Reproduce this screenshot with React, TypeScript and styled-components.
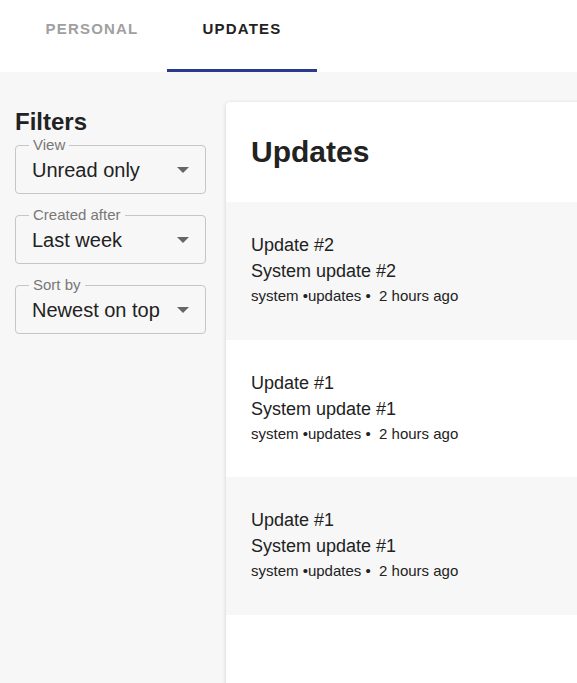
import styled, { createGlobalStyle } from 'styled-components';

const GlobalStyle = createGlobalStyle`
  html, body {
    margin: 0;
    padding: 0;
    overflow: hidden;
    background: #f7f7f7;
    font-family: 'Liberation Sans', Arial, sans-serif;
    color: #222222;
  }
`;

const Header = styled.div`
  height: 72px;
  background: #ffffff;
  display: flex;
  padding-left: 17px;
`;

const Tab = styled.div<{ $active?: boolean }>`
  width: 150px;
  box-sizing: border-box;
  padding-top: 20px;
  text-align: center;
  font-size: 15px;
  line-height: 17px;
  font-weight: bold;
  letter-spacing: 1.2px;
  color: ${({ $active }) => ($active ? '#222222' : '#a0a0a0')};
  border-bottom: 3px solid ${({ $active }) => ($active ? '#2b3a8f' : 'transparent')};
`;

const Main = styled.div`
  display: flex;
  gap: 20px;
  padding: 30px 0 0 15px;
`;

const Sidebar = styled.div`
  width: 191px;
  flex-shrink: 0;
  display: flex;
  flex-direction: column;
`;

const SideTitle = styled.h2`
  margin: 4px 0 0;
  font-size: 24px;
  line-height: 32px;
  font-weight: bold;
`;

const Filters = styled.div`
  display: flex;
  flex-direction: column;
  gap: 21px;
  margin-top: 7px;
`;

const Field = styled.div`
  height: 49px;
  box-sizing: border-box;
  border: 1px solid #c6c6c6;
  border-radius: 4px;
  padding: 0 16px;
  display: flex;
  align-items: center;
  justify-content: space-between;
  position: relative;
`;

const Label = styled.span`
  position: absolute;
  top: -9px;
  left: 13px;
  font-size: 15px;
  line-height: 16px;
  color: #777777;
  padding: 0 4px;
  background: #f7f7f7;
`;

const Value = styled.span`
  font-size: 20px;
  line-height: 24px;
  color: #222222;
`;

const Arrow = styled.svg`
  width: 12px;
  height: 6px;
`;

const Card = styled.div`
  flex: 1;
  min-width: 380px;
  min-height: 620px;
  background: #ffffff;
  border-radius: 4px 0 0 0;
  box-shadow: 0 1px 4px rgba(0, 0, 0, 0.16);
`;

const CardTitle = styled.h1`
  margin: 0;
  height: 100px;
  display: flex;
  align-items: center;
  padding-left: 25px;
  font-size: 30px;
  font-weight: bold;
`;

const Item = styled.div<{ $shade?: boolean }>`
  padding: 30px 25px 31.5px;
  background: ${({ $shade }) => ($shade ? '#f7f7f7' : '#ffffff')};
`;

const ItemTitle = styled.div`
  font-size: 18px;
  line-height: 26px;
`;

const Meta = styled.div`
  font-size: 15px;
  line-height: 24px;
  white-space: pre;
`;

const filters = [
  { label: 'View', value: 'Unread only' },
  { label: 'Created after', value: 'Last week' },
  { label: 'Sort by', value: 'Newest on top' },
];

const updates = [
  { title: 'Update #2', body: 'System update #2' },
  { title: 'Update #1', body: 'System update #1' },
  { title: 'Update #1', body: 'System update #1' },
];

export default function App() {
  return (
    <>
      <GlobalStyle />
      <Header>
        <Tab>PERSONAL</Tab>
        <Tab $active>UPDATES</Tab>
      </Header>
      <Main>
        <Sidebar>
          <SideTitle>Filters</SideTitle>
          <Filters>
            {filters.map((f) => (
              <Field key={f.label}>
                <Label>{f.label}</Label>
                <Value>{f.value}</Value>
                <Arrow viewBox="0 0 12 6">
                  <polygon points="0,0 12,0 6,6" fill="#666666" />
                </Arrow>
              </Field>
            ))}
          </Filters>
        </Sidebar>
        <Card>
          <CardTitle>Updates</CardTitle>
          {updates.map((u, i) => (
            <Item key={i} $shade={i % 2 === 0}>
              <ItemTitle>{u.title}</ItemTitle>
              <ItemTitle>{u.body}</ItemTitle>
              <Meta>{'system •updates •  2 hours ago'}</Meta>
            </Item>
          ))}
        </Card>
      </Main>
    </>
  );
}
